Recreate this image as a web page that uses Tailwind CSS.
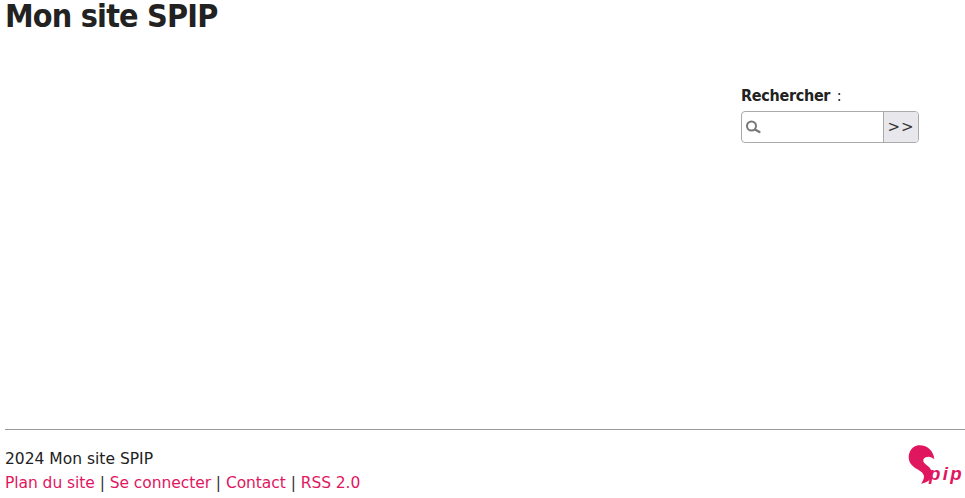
<!DOCTYPE html>
<html lang="fr">
  <head>
    <meta charset="UTF-8" />
    <title>Mon site SPIP</title>
    <script src="https://cdn.jsdelivr.net/npm/@tailwindcss/browser@4"></script>
  </head>
  <body class="bg-white text-[#222] font-['DejaVu_Sans',sans-serif] h-[498px] overflow-hidden flex flex-col">
    <!-- header -->
    <header class="h-[32px] pl-[5px]">
      <h1 class="font-['DejaVu_Sans_Condensed',sans-serif] text-[32px] leading-[32px] font-bold tracking-[-0.8px]">Mon site SPIP</h1>
    </header>

    <!-- search -->
    <div class="h-[397px] pt-[53px] pl-[741px]">
      <form>
        <label class="block text-[16px] leading-[20px] font-bold font-['DejaVu_Sans_Condensed',sans-serif] tracking-[-0.3px] pt-px">Rechercher <span class="font-normal ml-[2px]">:</span></label>
        <div class="flex w-[178px] h-[32px] mt-[5px] border border-[#aaa] rounded-[4px] overflow-hidden">
          <div class="flex-1 flex items-center pl-[3px]">
            <svg width="17" height="14" viewBox="0 0 17 14" fill="none" stroke="#777">
              <circle cx="6.5" cy="6" r="4.5" stroke-width="2" />
              <path d="M10 9.5 L14.5 12" stroke-width="2.2" stroke-linecap="round" />
            </svg>
          </div>
          <button type="button" class="w-[35px] border-l border-[#aaa] bg-[#e8e8ec] text-[15px] tracking-[1px] text-[#333]">&gt;&gt;</button>
        </div>
      </form>
    </div>

    <!-- footer -->
    <footer class="ml-[5px] border-t border-[#999] flex justify-between pt-[17px]">
      <div class="text-[15.5px] leading-[24px]">
        <p>2024 Mon site SPIP</p>
        <p class="text-[#333] tracking-[-0.06px]"><a class="text-[#e0175f]" href="#">Plan du site</a> | <a class="text-[#e0175f]" href="#">Se connecter</a> | <a class="text-[#e0175f]" href="#">Contact</a> | <a class="text-[#e0175f]" href="#">RSS 2.0</a></p>
      </div>
      <svg class="-mt-[5px]" width="60" height="48" viewBox="0 0 180 144" fill="#e0175f">
        <path d="M44 10 C68 10 86 28 88 52 C80 44 70 42 62 46 C52 51 53 60 62 67 C74 76 84 86 80 102 C76 115 64 123 48 125 C56 114 60 104 54 95 C46 84 26 80 16 64 C4 42 16 10 44 10 Z" />
        <text x="72" y="113" font-family="Liberation Sans" font-size="56" font-weight="bold" font-style="italic" letter-spacing="7">pip</text>
      </svg>
    </footer>
  </body>
</html>
